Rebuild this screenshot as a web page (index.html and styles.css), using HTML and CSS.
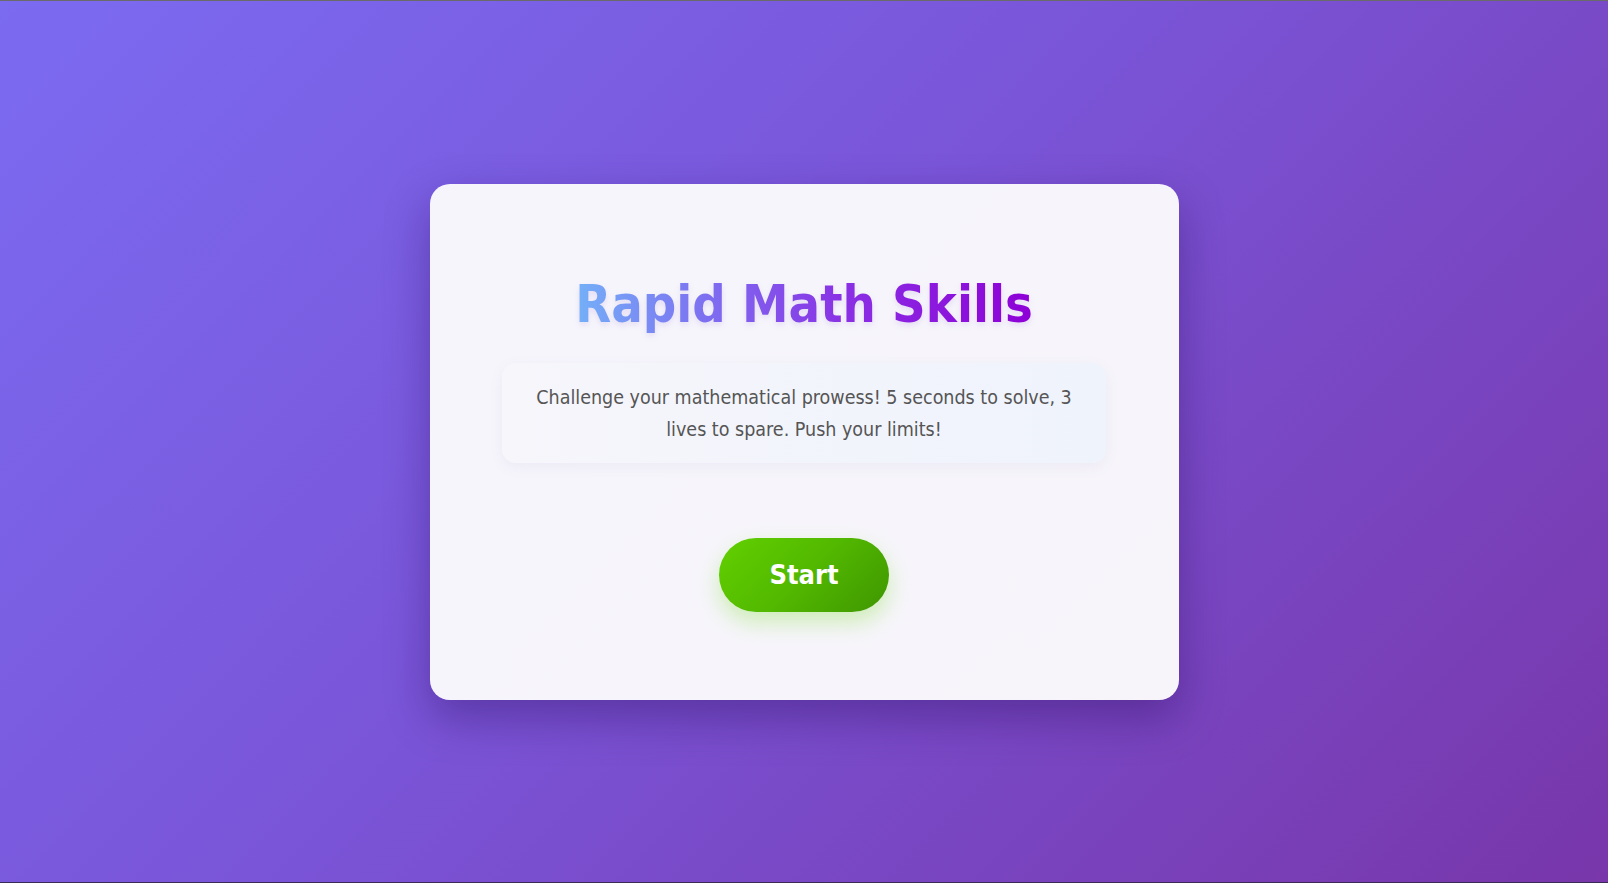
FILE: index.html
```html
<!DOCTYPE html>
<html lang="en">
<head>
<meta charset="utf-8">
<title>Rapid Math Skills</title>
<link rel="stylesheet" href="styles.css">
</head>
<body>
<main class="card">
  <h1 class="title">Rapid Math Skills</h1>
  <p class="intro">Challenge your mathematical prowess! 5 seconds to solve, 3 lives to spare. Push your limits!</p>
  <button class="start-btn" type="button">Start</button>
</main>
</body>
</html>
```

FILE: styles.css
```css
* { box-sizing: border-box; }

html, body {
  height: 100%;
}

body {
  margin: 0;
  min-height: 100vh;
  display: flex;
  align-items: center;
  justify-content: center;
  font-family: "DejaVu Sans Condensed", "DejaVu Sans", Verdana, sans-serif;
  background: linear-gradient(135deg, #7b6bf1 0%, #7a55d8 45%, #7836aa 100%);
  border-top: 1px solid #6a6a6a;
  border-bottom: 1px solid #3a2a55;
}

.card {
  width: 749px;
  height: 516px;
  background: linear-gradient(135deg, #f6f5fc 0%, #f7f5fa 100%);
  border-radius: 20px;
  box-shadow: 0 18px 44px rgba(40, 10, 90, 0.38);
  padding: 88px 72px 0;
  display: flex;
  flex-direction: column;
  align-items: center;
}

.title {
  margin: 0;
  font-size: 52px;
  line-height: 64px;
  font-weight: bold;
  background: linear-gradient(90deg, #74b0f8 0%, #7e6cf0 30%, #8a2ee4 60%, #8e00d6 100%);
  -webkit-background-clip: text;
  background-clip: text;
  color: transparent;
  filter: drop-shadow(0 3px 3px rgba(120, 80, 200, 0.14));
}

.intro {
  margin: 27px 0 0;
  width: 604px;
  padding: 19px 25px 17px;
  font-size: 19.5px;
  line-height: 32px;
  color: #555;
  text-align: center;
  border-radius: 14px;
  background: linear-gradient(90deg, #f6f6fb 0%, #eff3fc 100%);
  box-shadow: 0 4px 14px rgba(120, 100, 170, 0.08);
}

.start-btn {
  margin-top: 75px;
  height: 74px;
  padding: 0 50px;
  border: none;
  border-radius: 37px;
  font-family: inherit;
  font-size: 27px;
  font-weight: bold;
  color: #fff;
  background: linear-gradient(135deg, #62d000 0%, #52b800 50%, #3f9600 100%);
  box-shadow: 0 10px 22px rgba(110, 220, 20, 0.3);
  cursor: pointer;
}
```
